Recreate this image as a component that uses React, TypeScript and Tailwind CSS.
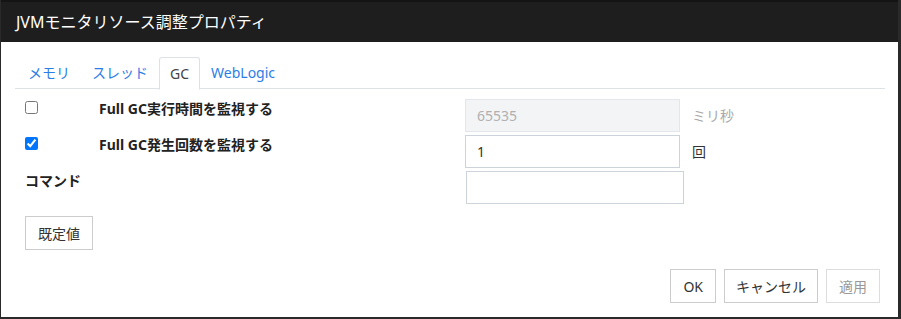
import { useState } from "react"

const tabs = ["メモリ", "スレッド", "GC", "WebLogic"]

export default function App() {
  const [active, setActive] = useState("GC")
  const [fullTime, setFullTime] = useState(false)
  const [fullCount, setFullCount] = useState(true)

  return (
    <div
      className="w-[901px] h-[319px] bg-[#1e1e1e] flex flex-col border-l border-r-[3px] border-b-2 border-[#2a2a2a] text-[#222]"
      style={{ fontFamily: '"Noto Sans", "Noto Sans CJK JP", sans-serif' }}
    >
      <div className="h-[42px] shrink-0 flex items-center pl-[15px] text-white text-[16px] border-t-2 border-[#141414]">
        JVMモニタリソース調整プロパティ
      </div>

      <div className="flex-1 bg-white flex flex-col pl-[14px] pr-[13px] pt-[15px]">
        <div className="flex border-b border-[#dee2e6] h-[32px] pl-[2px]">
          {tabs.map((t) => (
            <button
              key={t}
              onClick={() => setActive(t)}
              className={
                t === active
                  ? "px-[10px] border border-[#dee2e6] border-b-white rounded-t-[3px] bg-white text-[#444] text-[14px] leading-[30px] -mb-px h-[33px]"
                  : "px-[10px] border border-transparent text-[#2b7de9] text-[14px] leading-[30px]"
              }
            >
              {t}
            </button>
          ))}
        </div>

        <div className="pl-[10px] pt-[10px] flex flex-col gap-[3px]">
          <div className="flex items-start h-[33px]">
            <div className="w-[74px] pt-[2px] flex">
              <input
                type="checkbox"
                checked={fullTime}
                onChange={(e) => setFullTime(e.target.checked)}
                className="w-[13px] h-[13px] m-0 accent-[#0075ff]"
              />
            </div>
            <div className="w-[366px] pt-[1px] text-[14px] font-bold leading-[18px]">Full GC実行時間を監視する</div>
            <input
              disabled
              value="65535"
              readOnly
              className="w-[215px] h-[33px] px-[11px] border border-[#e3e6ea] bg-[#f3f4f6] text-[#b0b0b0] text-[14px] outline-none"
            />
            <span className="ml-[12px] self-center text-[14px] text-[#aaa]">ミリ秒</span>
          </div>

          <div className="flex items-start h-[33px]">
            <div className="w-[74px] pt-[2px] flex">
              <input
                type="checkbox"
                checked={fullCount}
                onChange={(e) => setFullCount(e.target.checked)}
                className="w-[13px] h-[13px] m-0 accent-[#0075ff]"
              />
            </div>
            <div className="w-[366px] pt-[1px] text-[14px] font-bold leading-[18px]">Full GC発生回数を監視する</div>
            <input
              defaultValue="1"
              className="w-[215px] h-[33px] px-[11px] border border-[#cdd3da] bg-white text-[#333] text-[14px] outline-none"
            />
            <span className="ml-[12px] self-center text-[14px] text-[#333]">回</span>
          </div>

          <div className="flex items-start h-[33px]">
            <div className="w-[441px] pt-[1px] text-[14px] font-bold leading-[18px]">コマンド</div>
            <input className="w-[218px] h-[33px] px-[11px] border border-[#cdd3da] bg-white text-[14px] outline-none" />
          </div>

          <div className="mt-[9px]">
            <button className="h-[34px] px-[12px] border border-[#cccccc] bg-white text-[14px] text-[#333]">既定値</button>
          </div>
        </div>

        <div className="flex justify-end gap-[8px] mt-[19px] pr-[5px]">
          <button className="h-[34px] px-[12px] border border-[#cccccc] bg-white text-[14px] text-[#333]">OK</button>
          <button className="h-[34px] px-[11px] border border-[#cccccc] bg-white text-[14px] text-[#333]">キャンセル</button>
          <button disabled className="h-[34px] px-[12px] border border-[#dddddd] bg-white text-[14px] text-[#999]">適用</button>
        </div>
      </div>
    </div>
  )
}
